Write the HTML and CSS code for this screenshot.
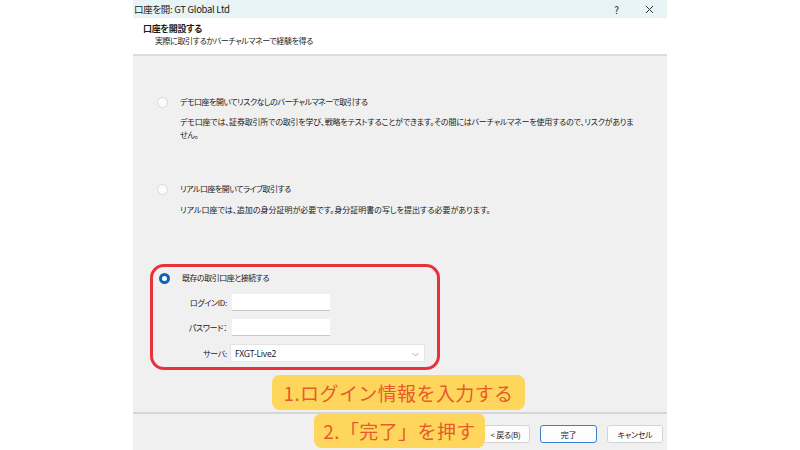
FILE: index.html
```html
<!DOCTYPE html>
<html lang="ja">
<head>
<meta charset="utf-8">
<link rel="stylesheet" href="styles.css">
</head>
<body>
<div class="dialog">
  <div class="titlebar">
    <span class="title">口座を開: GT Global Ltd</span>
    <span class="tb-btn help">?</span>
    <span class="tb-btn close">
      <svg width="9" height="9" viewBox="0 0 9 9"><path d="M1 1L8 8M8 1L1 8" stroke="#333" stroke-width="1"/></svg>
    </span>
  </div>
  <div class="header">
    <div class="h-title">口座を開設する</div>
    <div class="h-sub">実際に取引するかバーチャルマネーで経験を得る</div>
  </div>
  <div class="content">
    <div class="option opt1">
      <div class="opt-row"><span class="radio"></span><span class="opt-label">デモ口座を開いてリスクなしのバーチャルマネーで取引する</span></div>
      <div class="opt-desc">デモ口座では、証券取引所での取引を学び、戦略をテストすることができます。その間にはバーチャルマネーを使用するので、リスクがありま<br>せん。</div>
    </div>
    <div class="option opt2">
      <div class="opt-row"><span class="radio"></span><span class="opt-label">リアル口座を開いてライブ取引する</span></div>
      <div class="opt-desc">リアル口座では、追加の身分証明が必要です。身分証明書の写しを提出する必要があります。</div>
    </div>
    <div class="option opt3">
      <div class="opt-row"><span class="radio checked"></span><span class="opt-label">既存の取引口座と接続する</span></div>
      <div class="form">
        <label class="f-label">ログインID:</label>
        <span class="input"></span>
        <label class="f-label">パスワード：</label>
        <span class="input"></span>
        <label class="f-label">サーバ:</label>
        <span class="select">FXGT-Live2
          <svg class="chev" width="7" height="5" viewBox="0 0 7 5"><path d="M0.5 1L3.5 4L6.5 1" fill="none" stroke="#999" stroke-width="0.8"/></svg>
        </span>
      </div>
    </div>
  </div>
  <div class="footer">
    <button class="btn">&lt;&nbsp;戻る(B)</button>
    <button class="btn primary">完了</button>
    <button class="btn">キャンセル</button>
  </div>
</div>
<div class="note n1">1.ログイン情報を入力する</div>
<div class="note n2">2.「完了」を押す</div>
</body>
</html>
```
FILE: styles.css
```css
* { box-sizing: border-box; }
html, body { margin: 0; padding: 0; }
body {
  background: #ffffff;
  width: 800px;
  height: 450px;
  overflow: hidden;
  position: relative;
  font-family: "Noto Sans CJK JP", "Noto Sans", sans-serif;
  font-feature-settings: "palt";
  color: #1a1a1a;
}
.dialog {
  margin-left: 133px;
  width: 534px;
  height: 450px;
  background: #f0f0f0;
  display: flex;
  flex-direction: column;
}
.titlebar {
  height: 18px;
  background: #e7f3f5;
  display: flex;
  align-items: center;
  padding-left: 1px;
  font-size: 9.5px;
}
.title { flex: 1; letter-spacing: -0.3px; }
.tb-btn { width: 33px; display: flex; justify-content: center; align-items: center; font-size: 10px; }
.close { width: 32px; margin-right: 2px; }
.header {
  height: 38px;
  background: #ffffff;
  border-bottom: 2px solid #dcdcdc;
  padding: 4px 0 0 10px;
}
.h-title { font-size: 9px; font-weight: bold; line-height: 13px; letter-spacing: -0.3px; }
.h-sub { font-size: 8px; line-height: 12px; padding-left: 12px; letter-spacing: -0.4px; }
.content {
  flex: 1;
  padding: 40px 0 0 24px;
  font-size: 8px;
  letter-spacing: -0.5px;
}
.opt-row { display: flex; align-items: center; height: 12px; }
.radio {
  width: 11px; height: 11px;
  border-radius: 50%;
  background: #fbfbfb;
  border: 1px solid #d8d8d8;
  margin-right: 12px;
  flex: none;
}
.radio.checked {
  background: #ffffff;
  border: 3px solid #0f62b5;
}
.opt-label { line-height: 12px; }
.opt-desc {
  margin: 7px 0 0 23px;
  width: 470px;
  line-height: 13px;
  letter-spacing: -0.2px;
}
.opt2 { margin-top: 42px; }
.opt2 .opt-desc { margin-top: 8px; letter-spacing: 0; }
.opt3 {
  margin: 48px 0 0 -7px;
  width: 290px;
  height: 106px;
  border: 3px solid #e8323a;
  border-radius: 14px;
  padding: 5px 0 0 6px;
}
.form {
  display: grid;
  grid-template-columns: 70px auto;
  column-gap: 5px;
  row-gap: 8px;
  margin: 10px 0 0 -2px;
  align-items: center;
}
.f-label { text-align: right; line-height: 17px; letter-spacing: -0.3px; }
.input {
  width: 98px; height: 17px;
  background: #ffffff;
  border-bottom: 1px solid #c8c8c8;
}
.select {
  margin-left: -2px;
  width: 195px; height: 18px;
  background: #ffffff;
  border: 1px solid #e4e4e4;
  display: flex;
  align-items: center;
  padding-left: 4px;
  font-family: "Noto Sans", sans-serif;
  font-size: 8.5px;
  letter-spacing: -0.2px;
  position: relative;
}
.chev { position: absolute; right: 5px; top: 7px; }
.footer {
  height: 38px;
  border-top: 2px solid #d6d6d6;
  display: flex;
  justify-content: flex-end;
  align-items: center;
  gap: 10px;
  padding: 4px 4px 0 0;
}
.btn {
  height: 18px;
  background: #fdfdfd;
  border: 1px solid #d4d4d4;
  border-radius: 3px;
  font-family: "Noto Sans CJK JP", sans-serif;
  font-feature-settings: "palt";
  font-size: 8px;
  letter-spacing: -0.3px;
  color: #222;
  padding: 0;
  width: 56px;
}
.btn:first-child { width: 49px; }
.btn.primary { width: 57px; border: 1px solid #3a7fcc; }
.note {
  position: absolute;
  background: #fdd65b;
  color: #e85a2c;
  border-radius: 8px;
  font-size: 19px;
  letter-spacing: 0.4px;
  font-feature-settings: normal;
  line-height: 35px;
  height: 35px;
  text-align: center;
  font-family: "Noto Sans CJK JP", sans-serif;
}
.n1 { left: 272px; top: 375px; width: 253px; }
.n2 { left: 314px; top: 413px; width: 171px; }
```
